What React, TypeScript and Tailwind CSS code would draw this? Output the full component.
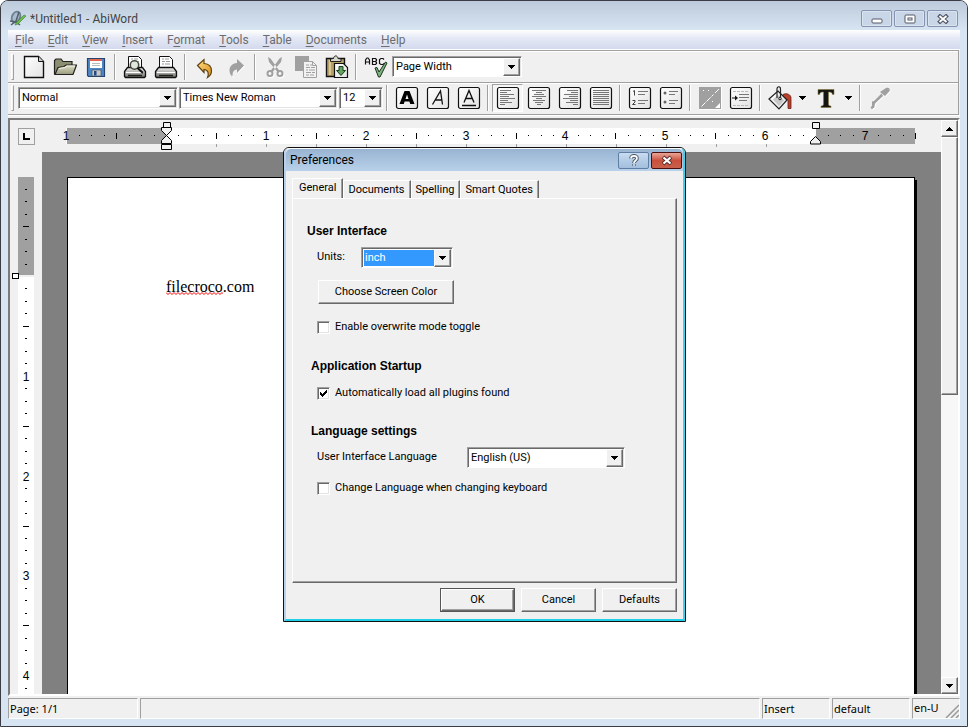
import { useState } from "react";
import type { ReactNode } from "react";
import clsx from "clsx";

const raised =
  "bg-[#f0f0f0] border border-t-white border-l-white border-r-[#696969] border-b-[#696969] shadow-[inset_-1px_-1px_0_#a0a0a0]";
const sunken =
  "bg-white border border-t-[#a0a0a0] border-l-[#a0a0a0] border-r-white border-b-white shadow-[inset_1px_1px_0_#696969,inset_-1px_-1px_0_#e3e3e3]";

const menus = [
  ["", "F", "ile"],
  ["", "E", "dit"],
  ["", "V", "iew"],
  ["", "I", "nsert"],
  ["F", "o", "rmat"],
  ["", "T", "ools"],
  ["", "T", "able"],
  ["", "D", "ocuments"],
  ["", "H", "elp"],
];

function Arrow({ up = false }: { up?: boolean }) {
  return (
    <svg width="7" height="4" viewBox="0 0 7 4" shapeRendering="crispEdges">
      <path d={up ? "M0 4h7L3.500 0z" : "M0 0h7L3.500 4z"} fill="#000" />
    </svg>
  );
}

function Select({ label, options, className, highlight, id }: {
  label?: string; options: string[]; className?: string; highlight?: boolean; id?: string;
}) {
  return (
    <div className={clsx("grid shrink-0 p-px", sunken, className)}>
      <select
        id={id}
        aria-label={label}
        className={clsx(
          "col-start-1 row-start-1 h-full w-full min-w-0 appearance-none rounded-none border border-white pl-px pr-4 text-[11px] leading-4 outline-none",
          highlight ? "bg-[#3399ff] text-white" : "bg-white text-black"
        )}
      >
        {options.map((o) => <option key={o}>{o}</option>)}
      </select>
      <span className={clsx("pointer-events-none col-start-1 row-start-1 flex w-[17px] items-center justify-center justify-self-end", raised)}>
        <Arrow />
      </span>
    </div>
  );
}

function Tool({ label, children, pressed, small }: { label: string; children: ReactNode; pressed?: boolean; small?: boolean }) {
  return (
    <button
      aria-label={label}
      className={clsx(
        "flex h-7 shrink-0 items-center justify-center border",
        small ? "w-[15px]" : "w-[31px]",
        pressed ? "border-t-[#a0a0a0] border-l-[#a0a0a0] border-r-white border-b-white bg-[#f6f6f6]" : "border-transparent"
      )}
    >
      {children}
    </button>
  );
}

function Sep() {
  return (
    <div className="flex h-[26px] w-2 shrink-0 justify-center">
      <div className="w-0.5 border-l border-r border-l-[#a0a0a0] border-r-white" />
    </div>
  );
}

function Grip() {
  return <div className="mr-1 h-[26px] w-[3px] shrink-0 border border-t-white border-l-white border-r-[#a0a0a0] border-b-[#a0a0a0]" />;
}

function Icon({ children }: { children: ReactNode }) {
  return <svg width="24" height="24" viewBox="0 0 24 24" fill="none" className="shrink-0">{children}</svg>;
}

function Frame({ children }: { children: ReactNode }) {
  return (
    <Icon>
      <rect x="1.500" y="1.500" width="21" height="21" rx="2" fill="url(#paper)" stroke="#111" strokeWidth="1.200" />
      {children}
    </Icon>
  );
}

// shared gradients, referenced by id from the toolbar icons
function Gradients() {
  return (
    <svg width="0" height="0" className="absolute">
      <defs>
        <linearGradient id="paper" x1="0" y1="0" x2="1" y2="1">
          <stop offset="0" stopColor="#fff" />
          <stop offset="1" stopColor="#e2e2e2" />
        </linearGradient>
        <linearGradient id="metal" x1="0" y1="0" x2="0" y2="1">
          <stop offset="0" stopColor="#f2f2f2" />
          <stop offset="1" stopColor="#6a6a64" />
        </linearGradient>
        <linearGradient id="folder" x1="0" y1="0" x2="0" y2="1">
          <stop offset="0" stopColor="#dfe0c8" />
          <stop offset="1" stopColor="#989a7c" />
        </linearGradient>
        <linearGradient id="gold" x1="0" y1="0" x2="1" y2="1">
          <stop offset="0" stopColor="#ffe08a" />
          <stop offset="1" stopColor="#d98a10" />
        </linearGradient>
      </defs>
    </svg>
  );
}

function Printer() {
  return (
    <>
      <path d="M5.500 14V1.500h10l3 3V14" fill="#fff" stroke="#111" />
      <path d="M8 4h2m1 0h4M8 6.500h3m1 0h4M8 9h2m1 0h5" stroke="#999" />
      <path d="M4.500 12.500h15l3 4v5l-1 1h-19l-1-1v-5z" fill="url(#metal)" stroke="#111" strokeWidth="1.300" />
      <path d="M3 17.500h18" stroke="#fff" />
      <path d="M5 20.500h14" stroke="#222" strokeWidth="1.500" />
    </>
  );
}

function Lines({ rows }: { rows: [number, number][] }) {
  return (
    <g stroke="#777" shapeRendering="crispEdges">
      {rows.map(([x1, x2], i) => <path key={i} d={`M${x1} ${4.5 + i * 2}H${x2}`} />)}
    </g>
  );
}

const leftRows: [number, number][] = [[4, 15], [4, 11], [4, 18], [4, 13], [4, 19], [4, 12], [4, 16], [4, 9]];
const midRows: [number, number][] = [[5, 19], [9, 15], [7, 17], [5, 19], [9, 15], [6, 18], [8, 16], [10, 14]];
const rightRows: [number, number][] = leftRows.map(([a, b]) => [24 - b, 24 - a]);
const fullRows: [number, number][] = leftRows.map(() => [4, 20]);

function StandardBar() {
  return (
    <div className="flex h-[31px] items-center border-t border-t-white pb-px pl-[3px]">
      <Grip />
      <Tool label="New">
        <Icon>
          <path d="M2.500 1.500h14l5 5v16h-19z" fill="url(#paper)" stroke="#111" strokeWidth="1.400" />
          <path d="M16.500 1.500v5h5" fill="#ccc" stroke="#111" />
        </Icon>
      </Tool>
      <Tool label="Open">
        <Icon>
          <path d="M1.500 19.500v-14l1.500-1.500h5l2 2.500h9v4" fill="#8c8e70" stroke="#222" strokeWidth="1.200" />
          <path d="M2 19.500l3-7 6-1 2-1.500h10.500l-3.500 9.500z" fill="url(#folder)" stroke="#222" strokeWidth="1.200" />
          <path d="M6 13.500l6-1 2-1.500h8" stroke="#f4f4e6" />
        </Icon>
      </Tool>
      <Tool label="Save">
        <Icon>
          <path d="M3.500 3.500h17v18h-16l-1-1z" fill="#4f86c6" stroke="#27466f" strokeWidth="1.200" />
          <path d="M6 4h12v9H6z" fill="#fff" />
          <path d="M6 4h12v2H6z" fill="#e0644e" />
          <path d="M8 8.500h8M8 10.500h8" stroke="#bbb" />
          <path d="M8 15h9v6H8z" fill="#c4c8cc" stroke="#345" strokeWidth=".6" />
          <path d="M10 16h2.500v4.500H10z" fill="#244a80" />
        </Icon>
      </Tool>
      <Sep />
      <Tool label="Print preview">
        <Icon>
          <Printer />
          <circle cx="11.500" cy="10" r="4.200" fill="#dfe8df" stroke="#4a4a40" strokeWidth="1.500" />
          <path d="M14.500 13l5.500 5" stroke="#111" strokeWidth="2" />
        </Icon>
      </Tool>
      <Tool label="Print"><Icon><Printer /></Icon></Tool>
      <Sep />
      <Tool label="Undo">
        <Icon>
          <path d="M4.500 10.500l6.500-6v4c5 .3 7.500 3.500 7.500 7.500 0 3-1.500 5-4 6.500 1.500-4 1-7.500-3.500-8v3z" fill="url(#gold)" stroke="#5f4210" strokeWidth="1.200" />
        </Icon>
      </Tool>
      <Tool label="Redo">
        <Icon>
          <path d="M20 10.500L13 4v4C8 8.500 5.500 11.500 5.500 15.500c0 3 1.500 5.500 3.500 7-1-4.500 0-7.500 4-8v3.500z" fill="#a0a0a0" />
          <path d="M20.500 11l-7 7.500M9.500 23L8 20.500" stroke="#fff" />
        </Icon>
      </Tool>
      <Sep />
      <Tool label="Cut">
        <Icon>
          <g stroke="#fff" strokeWidth="2" transform="translate(1 1)">
            <circle cx="7" cy="18.500" r="2.500" /><circle cx="17" cy="18.500" r="2.500" />
          </g>
          <path d="M5 2l1 5 8.500 10 2-1L7.500 3.500zM19 2l-1 5-8.500 10-2-1L16.500 3.500z" fill="#a0a0a0" />
          <g stroke="#a0a0a0" strokeWidth="2">
            <circle cx="7" cy="18.500" r="2.500" /><circle cx="17" cy="18.500" r="2.500" />
          </g>
        </Icon>
      </Tool>
      <Tool label="Copy">
        <Icon>
          <path d="M1 1h14v15H1z" fill="#a0a0a0" />
          <path d="M9.500 6.500h9l4 4v12h-13z" fill="#f2f2f2" stroke="#a0a0a0" />
          <path d="M12 10h3m1 0h2M12 12.500h4m1 0h4M12 15h2m1 0h6M12 17.500h5m1 0h3M12 20h3m1 0h4" stroke="#a0a0a0" />
          <path d="M18.500 6.500v4h4" stroke="#a0a0a0" />
        </Icon>
      </Tool>
      <Tool label="Paste">
        <Icon>
          <path d="M1.500 3.500h18v18h-18z" fill="#b6a068" stroke="#111" strokeWidth="1.400" />
          <path d="M4 5h2v15H4z" fill="#d9c995" />
          <path d="M5.500 6.500V4l3-.5C9 0 12.500 0 13 3.500l3 .5v2.500z" fill="#d8d8d0" stroke="#222" />
          <path d="M9.500 8.500h9l4 4v10h-13z" fill="url(#paper)" stroke="#111" strokeWidth="1.200" />
          <path d="M14 11.500h4v4h2.500L16 20.500l-4.500-5H14z" fill="#5fa35c" stroke="#1d3d1c" />
        </Icon>
      </Tool>
      <Sep />
      <Tool label="Spelling">
        <Icon>
          <path d="M1.500 9.500V5l1.500-2h1l1.500 2v4.500M1.500 7h4M8.500 3.500h3l1 1v1l-1 1h-3zm0 3h3l1 1v1l-1 1h-3zM20 4.500l-1-1h-2l-1.500 1v4l1.500 1h2l1-1" stroke="#111" strokeWidth="1.200" />
          <path d="M11 13l2-.5 2 4.500L21.500 7l1.500 1-7 14h-1.500z" fill="#7fb381" stroke="#1a331a" />
        </Icon>
      </Tool>
      <Select label="Zoom" options={["Page Width", "Whole Page", "100%"]} className="ml-px h-[21px] w-[130px]" />
    </div>
  );
}

function FormatBar() {
  return (
    <div className="flex h-[31px] items-center border-t border-t-white pb-0.5 pl-[3px]">
      <Grip />
      <div className="flex gap-px">
        <Select label="Style" options={["Normal", "Heading 1"]} className="h-[22px] w-40" />
        <Select label="Font" options={["Times New Roman", "Arial"]} className="h-[22px] w-[159px]" />
        <Select label="Size" options={["12", "14"]} className="h-[22px] w-11" />
      </div>
      <Sep />
      <Tool label="Bold">
        <Frame><path d="M4.500 18l5-13h5l5 13h-4.300l-.8-2.500H9.600L8.800 18zM10.500 13h3L12 8.500z" fill="#000" /></Frame>
      </Tool>
      <Tool label="Italic">
        <Frame><path d="M6.500 18.500L14.500 5l2 13.500M9 14h7" stroke="#111" strokeWidth="1.300" /></Frame>
      </Tool>
      <Tool label="Underline">
        <Frame><path d="M7 16.500L12 4.500l5 12M8.500 12.500h7M5 19.500h14" stroke="#111" strokeWidth="1.300" /></Frame>
      </Tool>
      <Sep />
      <Tool label="Align left" pressed><Frame><Lines rows={leftRows} /></Frame></Tool>
      <Tool label="Center"><Frame><Lines rows={midRows} /></Frame></Tool>
      <Tool label="Align right"><Frame><Lines rows={rightRows} /></Frame></Tool>
      <Tool label="Justify"><Frame><Lines rows={fullRows} /></Frame></Tool>
      <Sep />
      <Tool label="Numbering">
        <Frame>
          <path d="M5 5.500l1.500-1V9.500M4.500 14.500h2.500v1.500l-2.500 2.500h3" stroke="#444" />
          <path d="M10 5.500h10M10 8.500h7M10 14.500h10M10 17.500h7" stroke="#777" />
        </Frame>
      </Tool>
      <Tool label="Bullets">
        <Frame>
          <circle cx="6" cy="7" r="1.500" fill="#666" /><circle cx="6" cy="16" r="1.500" fill="#666" />
          <path d="M10 5.500h9M10 8.500h6M10 14.500h9M10 17.500h6" stroke="#777" />
        </Frame>
      </Tool>
      <Sep />
      <Tool label="Insert image">
        <Icon>
          <path d="M1 1h22v22H1z" fill="#a0a0a0" />
          <path d="M3.500 20.500l4-4M8.500 15.500l4-4M13.500 10.500l2-2M17 7l4-4M5 4.500h1M10 4.500h1M14 15.500h1" stroke="#fff" />
          <path d="M22 17v5h-5z" fill="#fff" />
          <path d="M23.500 1v22.500H1" stroke="#fff" />
        </Icon>
      </Tool>
      <Tool label="Indent">
        <Frame>
          <path d="M4 5.500h16M4 19.500h16" stroke="#bbb" strokeDasharray="3 1" />
          <path d="M10 8.500h10M10 11.500h10M10 14.500h8" stroke="#777" />
          <path d="M3 12h4" stroke="#111" />
          <path d="M6 9.500l3 2.500-3 2.500z" fill="#111" />
        </Frame>
      </Tool>
      <Sep />
      <Tool label="Highlight">
        <Icon>
          <path d="M15 8.500c3-2 8.500 0 8 4v10h-3V14l-4-2z" fill="#b8402c" stroke="#6a2014" strokeWidth=".8" />
          <path d="M1 13L10 5l9 9-8 9z" fill="url(#paper)" stroke="#222" strokeWidth="1.200" />
          <path d="M5 13.500l5-4.500 6 5.500-5 5.500z" fill="#c8c8c8" />
          <path d="M9 12V3c0-3 3.500-3 3.500 0v8" stroke="#222" strokeWidth="1.200" />
          <circle cx="12" cy="12.500" r="1.300" stroke="#222" />
        </Icon>
      </Tool>
      <Tool label="Highlight options" small><Arrow /></Tool>
      <Tool label="Font color">
        <Icon>
          <path d="M4 3.500h16v5h-1.500C18 6.500 17 6 14.500 6v12c0 1.500.7 2 2.500 2v1.500H7V20c1.800 0 2.500-.5 2.500-2V6C7 6 6 6.500 5.500 8.500H4z" fill="#151515" stroke="#8a7838" strokeWidth=".6" />
        </Icon>
      </Tool>
      <Tool label="Font color options" small><Arrow /></Tool>
      <Sep />
      <Tool label="Color picker">
        <Icon>
          <path d="M13.500 7.500L6 15l-2 .5v4l-1.500 2.500 1.500 1 2.500-1.500.5-4L15 10z" fill="#a0a0a0" />
          <path d="M12 6l5 4 4.500-5c1-3-1.500-4-3.500-3z" fill="#a0a0a0" />
          <path d="M4.500 23.500l2.500-1.500.5-4 8-7.500M17.500 10.500l5-5" stroke="#fff" />
        </Icon>
      </Tool>
    </div>
  );
}

const PPI = 100;

function HorizontalRuler() {
  const origin = 124;
  const ticks = Array.from({ length: 69 }, (_, i) => i - 8);
  return (
    <svg height="32" className="block w-full text-[12px]" shapeRendering="crispEdges">
      <rect x={origin - PPI} y="8" width={PPI * 8.5 - 1} height="16" fill="#fff" />
      <rect x={origin - PPI + 1} y="8" width={PPI - 1} height="16" fill="#a0a0a0" />
      <rect x="774" y="8" width="99" height="16" fill="#a0a0a0" />
      {ticks.map((i) => {
        const x = Math.round(origin + (i * PPI) / 8 - i / 60);
        if (i === 0 || i === 52) return null;
        if (i % 8 === 0) {
          return <text key={i} x={x} y="20" textAnchor="middle" fontFamily="Liberation Sans, sans-serif">{Math.abs(i / 8)}</text>;
        }
        return <rect key={i} x={x} y={i % 4 === 0 ? 13 : 15} width="1" height={i % 4 === 0 ? 6 : 1} />;
      })}
      {Array.from({ length: 12 }, (_, i) => (
        <rect key={i} x={174 + i * 50} y="24" width="1" height="3" fill="#a0a0a0" />
      ))}
      <g fill="#f0f0f0" stroke="#000" shapeRendering="auto">
        <path d="M121.500 2.500h7v5h-7z" />
        <path d="M119.500 7.500h10v3l-5 5-5-5z" />
        <path d="M124.500 15.500l5 5v3h-10v-3z" />
        <path d="M119.500 24.500h10v5h-10z" />
        <path d="M770.500 2.500h7v6h-7z" />
        <path d="M773.500 16.500l5 5v2.500h-10v-2.500z" />
      </g>
    </svg>
  );
}

function VerticalRuler() {
  const origin = 124;
  const ticks = Array.from({ length: 44 }, (_, i) => i - 7);
  return (
    <svg width="32" className="block h-full text-[12px]" shapeRendering="crispEdges">
      <rect x="8" y="25" width="16" height="98" fill="#a0a0a0" />
      <rect x="8" y="125" width="16" height="100%" fill="#fff" />
      {ticks.map((i) => {
        const y = Math.round(origin + (i * PPI) / 8 - i / 40);
        if (i === 0) return null;
        if (i % 8 === 0) {
          return <text key={i} x="16" y={y + 5} textAnchor="middle" fontFamily="Liberation Sans, sans-serif">{i / 8}</text>;
        }
        return <rect key={i} x={i % 4 === 0 ? 13 : 15} y={y} width={i % 4 === 0 ? 6 : 2} height="1" />;
      })}
      <rect x="2.500" y="121.500" width="6" height="5" fill="#fff" stroke="#000" />
    </svg>
  );
}

// zigzag drawn below a misspelled word
const squiggle = "M0 .5" + Array.from({ length: 15 }, () => "l2 2l2 -2").join("");

function Editor() {
  return (
    <div className="mt-0.5 flex min-h-0 flex-1 border-2 border-t-[#7a7a7a] border-l-[#7a7a7a] border-r-white border-b-white">
      <div className="grid min-w-0 flex-1 grid-cols-[32px_minmax(0,1fr)] grid-rows-[32px_minmax(0,1fr)]">
        <button aria-label="Tab type" className="m-auto flex h-[17px] w-[17px] items-center justify-center border border-[#a0a0a0]">
          <svg width="7" height="7"><path d="M1 0v6h6" fill="none" stroke="#000" strokeWidth="2" /></svg>
        </button>
        <HorizontalRuler />
        <div className="min-h-0 overflow-hidden"><VerticalRuler /></div>
        <div className="flex min-h-0 overflow-hidden bg-[#808080] pt-[25px] pr-[26px] pl-[25px]">
          <div className="-mb-1 flex-1 border-t border-r border-l border-black bg-white pt-[99px] pl-[98px] shadow-[2px_3px_0_#000]">
            <p className="font-['Liberation_Serif',serif] text-base leading-5">
              <span className="relative">
                filecroco
                <svg className="absolute bottom-0 left-0 w-full" height="3">
                  <path d={squiggle} fill="none" stroke="#f00000" />
                </svg>
              </span>
              .com
            </p>
          </div>
        </div>
      </div>
      <div className="flex w-[17px] flex-col bg-[#f7f7f7]">
        <button aria-label="Scroll up" className={clsx("flex h-[17px] items-center justify-center", raised)}><Arrow up /></button>
        <div className={clsx("h-[45%]", raised)} />
        <div className="flex-1" />
        <button aria-label="Scroll down" className={clsx("flex h-[17px] items-center justify-center", raised)}><Arrow /></button>
      </div>
    </div>
  );
}

function StatusBar() {
  const field = "h-[21px] whitespace-nowrap border border-t-[#a0a0a0] border-l-[#a0a0a0] border-r-white border-b-white pl-px leading-[20px]";
  return (
    <div className="mt-0.5 flex gap-0.5 bg-[#f0f0f0] font-['Noto_Sans',sans-serif] text-[11px]">
      <div className={clsx("w-[130px]", field)}>Page: 1/1</div>
      <div className={clsx("flex-1", field)} />
      <div className={clsx("w-[68px]", field)}>Insert</div>
      <div className={clsx("w-[78px]", field)}>default</div>
      <div className={clsx("flex w-12 items-end justify-between", field)}>
        <span>en-U</span>
        <svg width="14" height="14" className="shrink-0">
          <path d="M1 14L14 1M6 14l8-8M11 14l3-3" stroke="#999" strokeWidth="1.500" />
        </svg>
      </div>
    </div>
  );
}

function CheckRow({ label, checked, onChange }: { label: string; checked: boolean; onChange: (v: boolean) => void }) {
  return (
    <label className="flex items-center gap-[5px] leading-4">
      <span className="grid">
        <input
          type="checkbox"
          checked={checked}
          onChange={(e) => onChange(e.target.checked)}
          className={clsx("peer col-start-1 row-start-1 h-[13px] w-[13px] appearance-none", sunken)}
        />
        <svg width="13" height="13" className="pointer-events-none col-start-1 row-start-1 hidden peer-checked:block" shapeRendering="crispEdges">
          <path d="M3 5v3l2 2 5-5V2L5 7z" fill="#000" />
        </svg>
      </span>
      {label}
    </label>
  );
}

const tabs = ["General", "Documents", "Spelling", "Smart Quotes"];

function Preferences() {
  const [tab, setTab] = useState("General");
  const [overwrite, setOverwrite] = useState(false);
  const [plugins, setPlugins] = useState(true);
  const [keyboard, setKeyboard] = useState(false);

  return (
    <div
      role="dialog"
      aria-label="Preferences"
      className="absolute top-[146px] left-[282px] w-[403px] rounded-t-md border border-[#111] bg-[#f0f0f0]"
    >
      <div className="rounded-t-[5px] border-t border-r-2 border-b-2 border-l-2 border-t-white/70 border-r-[#3fd0ec] border-b-[#22cfe8] border-l-[#b9d1ea]">
        <div className="flex h-[22px] items-center gap-0.5 rounded-t-[5px] bg-linear-to-b from-[#98b4d2] to-[#b9d1ea] pr-px pl-1">
          <h2 className="flex-1 font-['Roboto',sans-serif] text-[12px] leading-4">Preferences</h2>
          <button aria-label="Help" className="flex h-[17px] w-[31px] items-center justify-center rounded-xs border border-[#5f7ea3] bg-linear-to-b from-[#c9dcf0] via-[#b4cce6] via-50% to-[#a3bfdd]">
            <svg width="12" height="13" fill="none">
              <path d="M3 4.500C3 1 9 1 9 4.500 9 6.500 6 6.500 6 9M6 10.200v1.600" stroke="#4a5568" strokeWidth="3.600" />
              <path d="M3 4.500C3 1 9 1 9 4.500 9 6.500 6 6.500 6 9M6 10.200v1.600" stroke="#fff" strokeWidth="1.700" />
            </svg>
          </button>
          <button aria-label="Close" className="flex h-[17px] w-[31px] items-center justify-center rounded-xs border border-[#4a1010] bg-linear-to-b from-[#e8a598] via-[#c9503c] via-50% to-[#c8604c]">
            <svg width="12" height="11">
              <path d="M2 2l8 7M10 2l-8 7" stroke="#5a3030" strokeWidth="4" />
              <path d="M2.500 2.500l7 6M9.500 2.500l-7 6" stroke="#fff" strokeWidth="2.200" />
            </svg>
          </button>
        </div>

        <div className="pt-[7px] pr-1.5 pb-[7px] pl-1.5">
          <div role="tablist" className="flex h-5 items-end">
            {tabs.map((t) => (
              <button
                key={t}
                role="tab"
                aria-selected={t === tab}
                onClick={() => setTab(t)}
                className={clsx(
                  "border-t border-l border-t-white border-l-white border-r border-r-[#696969] shadow-[inset_-1px_0_0_#a0a0a0] leading-4",
                  t === tab ? "h-5 px-1.5 pb-px" : "h-[18px] pr-[5px] pl-1"
                )}
              >
                {t}
              </button>
            ))}
          </div>
          <div
            role="tabpanel"
            className="flex h-[385px] flex-col items-start border border-t-white border-r-[#696969] border-b-[#696969] border-l-white pt-6 pl-[14px] shadow-[inset_-1px_-1px_0_#a0a0a0]"
          >
            <h3 className="font-['Liberation_Sans',sans-serif] text-[12px] leading-4 font-bold">User Interface</h3>
            <div className="mt-2 ml-[10px] flex items-center">
              <label htmlFor="units" className="w-11">Units:</label>
              <Select id="units" options={["inch", "cm", "points"]} className="h-[21px] w-[92px]" highlight />
            </div>
            <button className={clsx("mt-3 ml-[11px] h-6 w-[136px]", raised)}>Choose Screen Color</button>
            <div className="mt-[15px] ml-[10px]">
              <CheckRow label="Enable overwrite mode toggle" checked={overwrite} onChange={setOverwrite} />
            </div>
            <h3 className="mt-[23px] ml-1 font-['Liberation_Sans',sans-serif] text-[12px] leading-4 font-bold">Application Startup</h3>
            <div className="mt-[11px] ml-[10px]">
              <CheckRow label="Automatically load all plugins found" checked={plugins} onChange={setPlugins} />
            </div>
            <h3 className="mt-[22px] ml-1 font-['Liberation_Sans',sans-serif] text-[12px] leading-4 font-bold">Language settings</h3>
            <div className="mt-2 ml-[10px] flex items-center">
              <label htmlFor="lang" className="w-[150px]">User Interface Language</label>
              <Select id="lang" options={["English (US)", "Deutsch"]} className="h-[21px] w-[158px]" />
            </div>
            <div className="mt-3 ml-[10px]">
              <CheckRow label="Change Language when changing keyboard" checked={keyboard} onChange={setKeyboard} />
            </div>
          </div>
          <div className="mt-[5px] flex justify-end gap-1.5">
            <button className="h-6 w-[75px] border border-[#555] p-0">
              <span className={clsx("flex h-full items-center justify-center", raised)}>OK</span>
            </button>
            <button className={clsx("h-6 w-[75px]", raised)}>Cancel</button>
            <button className={clsx("h-6 w-[75px]", raised)}>Defaults</button>
          </div>
        </div>
      </div>
    </div>
  );
}

function CaptionButton({ label, children }: { label: string; children: ReactNode }) {
  return (
    <button aria-label={label} className="flex h-[17px] w-[31px] items-center justify-center rounded-xs border border-[#8792b0] bg-[#c8d6e8] shadow-[inset_0_0_0_1px_#d9e4f1]">
      {children}
    </button>
  );
}

export default function App() {
  return (
    <div className="relative flex h-screen flex-col overflow-hidden rounded-t-lg border border-[#3c3c44] bg-[#d7e4f2] px-[7px] pb-[7px] font-['Roboto',sans-serif] text-[11px] text-black">
      <Gradients />
      <header className="-mx-[7px] flex h-[29px] shrink-0 items-center gap-0.5 bg-linear-to-b from-[#bccadb] to-[#d7e4f2] pt-1.5 pr-[9px] pl-2">
        <svg width="18" height="18" viewBox="0 0 18 18" fill="none" className="mr-px">
          <ellipse cx="7" cy="7" rx="4" ry="5.500" transform="rotate(25 7 7)" stroke="#6f8294" strokeWidth="2" fill="#a9bccb" />
          <path d="M2 15l5-4 3-9M1 11l6 1 4 3" stroke="#52606c" strokeWidth="1.500" />
          <path d="M7 13l8-8 2 1-8 8-3 1z" fill="#6cc04a" stroke="#3b7a2c" strokeWidth=".6" />
        </svg>
        <h1 className="flex-1 text-[12px] leading-4 text-[#444]">*Untitled1 - AbiWord</h1>
        <CaptionButton label="Minimize">
          <svg width="12" height="10"><rect x="1" y="5" width="10" height="4" rx="1" fill="#fff" stroke="#555866" /></svg>
        </CaptionButton>
        <CaptionButton label="Maximize">
          <svg width="12" height="10" fill="none">
            <rect x="1" y="1" width="10" height="8" rx="1" fill="#fff" stroke="#555866" />
            <rect x="4" y="4" width="4" height="2" stroke="#555866" />
          </svg>
        </CaptionButton>
        <CaptionButton label="Close window">
          <svg width="12" height="10">
            <path d="M1.500 1l9 8M10.500 1l-9 8" stroke="#555866" strokeWidth="4" />
            <path d="M2.500 2l7 6M9.500 2l-7 6" stroke="#fff" strokeWidth="1.800" />
          </svg>
        </CaptionButton>
      </header>
      <nav className="flex h-5 shrink-0 items-center gap-[14px] border-b border-b-white bg-linear-to-b from-white via-[#e6eaf6] via-40% to-[#d3daed] pl-[7px] text-[12px] leading-4 text-[#6d6d6d]">
        {menus.map(([pre, key, post]) => (
          <button key={key + post}>{pre}<u className="underline-offset-2">{key}</u>{post}</button>
        ))}
      </nav>
      <div className="flex min-h-0 flex-1 flex-col bg-[#f0f0f0]">
        <div className="mr-px shrink-0 divide-y divide-[#a0a0a0] border-t border-r border-b border-[#a0a0a0]">
          <div><StandardBar /></div>
          <div><FormatBar /></div>
        </div>
        <div className="h-px shrink-0 bg-white" />
        <Editor />
        <StatusBar />
      </div>
      <Preferences />
    </div>
  );
}
